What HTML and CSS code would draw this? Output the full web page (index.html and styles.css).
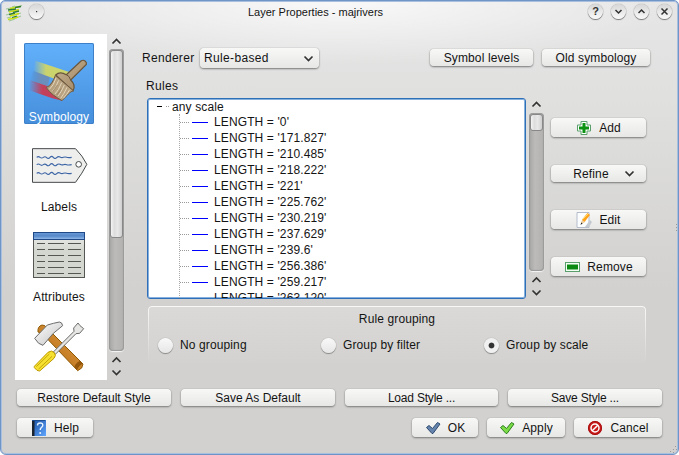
FILE: index.html
```html
<!DOCTYPE html>
<html lang="en">
<head>
<meta charset="utf-8">
<title>Layer Properties - majrivers</title>
<link rel="stylesheet" href="styles.css">
</head>
<body>
<div class="window">
  <header class="titlebar">
    <svg class="app-icon" width="18" height="18" viewBox="0 0 18 18" fill="none">
      <path d="M7 3l3-1M12 3l5-1.500M1 5l5-1M3 7.500l4-.5M1 11l4-1M9 11l7-2M2 14l4-1M9 15l7-3M4 17l6-2" stroke="#9fc79a" stroke-width="1.200"/>
      <path d="M5 4.500l10-2M4 8l10-2.500M5 12l9-2.500M3 15.500l10-2.500" stroke="#cbe010" stroke-width="1.700"/>
      <path d="M10 3.500l6-1M3 6l8-1M8 8.500l6-1.500M4 10.500l6-1.500M7 13.500l5-1.500" stroke="#2f7d35" stroke-width="1.300"/>
    </svg>
    <span class="round"><svg width="15" height="15" viewBox="0 0 15 15"><rect x="7" y="7" width="1.200" height="1.200" fill="#333"/></svg></span>
    <h1 class="title">Layer Properties - majrivers</h1>
    <span class="round help">?</span>
    <span class="round"><svg class="chev" width="15" height="15" viewBox="0 0 15 15"><path d="M4.500 6l3 3 3-3"/></svg></span>
    <span class="round"><svg class="chev" width="15" height="15" viewBox="0 0 15 15"><path d="M4.500 9l3-3 3 3"/></svg></span>
    <span class="round"><svg class="chev" width="15" height="15" viewBox="0 0 15 15"><path d="M4.500 4.500l6 6m0-6l-6 6"/></svg></span>
  </header>

  <div class="content">
    <nav class="pages">
      <div class="page selected">
        <svg width="64" height="47" viewBox="84 171 192 141">
          <defs>
            <linearGradient id="yl"><stop offset="0" stop-color="#cbd36d" stop-opacity="0"/><stop offset=".35" stop-color="#cbd36d"/></linearGradient>
            <linearGradient id="rd"><stop offset="0" stop-color="#c8374f" stop-opacity="0"/><stop offset=".4" stop-color="#c3405a"/></linearGradient>
            <linearGradient id="bl"><stop offset="0" stop-color="#5484bd" stop-opacity="0"/><stop offset=".5" stop-color="#6a8fbd"/></linearGradient>
            <linearGradient id="br" x1="0" y1="0" x2="1" y2="1"><stop offset="0" stop-color="#c9b391"/><stop offset="1" stop-color="#9d8361"/></linearGradient>
          </defs>
          <path d="M106 212l50 17-8 32-52-18z" fill="url(#bl)"/>
          <path d="M112 182l104 35-8 18-36 2-66-24z" fill="url(#yl)"/>
          <path d="M95 240l52 18 46 44-30-7-70-24z" fill="url(#rd)"/>
          <path d="M173 225c8-8 20-8 32-1l44-41c9-6 18 2 16 10l-47 47c13 12 12 24 7 33z" fill="url(#br)" stroke="#68543a" stroke-width="3.500"/>
          <path d="M205 224q10 4 13 16" fill="none" stroke="#68543a" stroke-width="3"/>
          <path d="M172 226l54 46c-12 5-17 13-34 30-16-9-36-22-47-39 14-7 22-21 27-37z" fill="#b8a17f" stroke="#6e5a3e" stroke-width="3"/>
          <path d="M174 234q-7 23-20 34M182 241q-8 23-20 34M191 248q-9 23-20 34M199 255q-9 22-19 33M207 262q-9 20-19 33M215 269q-9 16-19 26" stroke="#e2d6bc" stroke-width="3" fill="none"/>
          <path d="M152 262l12-17M164 275l14-20M177 285l13-20" stroke="#7a6547" stroke-width="1.500"/>
        </svg>
        <span class="page-name">Symbology</span>
      </div>
      <div class="page">
        <svg class="labels-icon" width="57" height="37" viewBox="93 21 171 111" fill="none">
          <path d="M97.500 26h129q21 21 34 47-13 26-34 54h-129z" fill="#eeefed" stroke="#45494b" stroke-width="3"/>
          <circle cx="236" cy="73" r="8.500" fill="#fff" stroke="#45494b" stroke-width="3"/>
          <path d="M110 52q5-4 10 0t10 0 10 1 10-1 10 0 10 1 10-2 10 1 10 0 15 0M110 74q5-4 10 0t10 0 10 1 10-1 10 0 10 1 10-2 10 1 10 0 15 0M110 100q5-4 10 0t10 0 10 1 10-1 10 0 10 1 10-2 10 1 10 0 15 0" stroke="#3c64a5" stroke-width="3.400"/>
        </svg>
        <span class="page-name">Labels</span>
      </div>
      <div class="page">
        <svg class="attributes-icon" width="54" height="48" viewBox="0 0 54 48">
          <defs><linearGradient id="hd" x2="0" y2="1"><stop stop-color="#6b9ad8"/><stop offset=".5" stop-color="#5688c8"/><stop offset="1" stop-color="#9bc0ee"/></linearGradient>
          <linearGradient id="tb" x2="0" y2="1"><stop stop-color="#eeeeec"/><stop offset=".4" stop-color="#d3d7cf"/><stop offset="1" stop-color="#d3d7cf"/></linearGradient></defs>
          <rect x="1.500" y="1.500" width="51" height="45" fill="url(#tb)" stroke="#555753"/>
          <rect x="1.500" y="1.500" width="51" height="7" fill="url(#hd)" stroke="#204a87"/>
          <path d="M5 12.500h8m3 0h16m4 0h13M5 18.500h8m3 0h16m4 0h13M5 24.500h8m3 0h16m4 0h13M5 30.500h8m3 0h16m4 0h13M5 36.500h8m3 0h16m4 0h13M5 42.500h8m3 0h16m4 0h13" stroke="#555753"/>
        </svg>
        <span class="page-name">Attributes</span>
      </div>
      <div class="page">
        <svg width="52" height="52" viewBox="99 180 156 156" stroke-width="3" stroke-linejoin="round">
          <defs><linearGradient id="st" x2="1" y2="1"><stop stop-color="#fff"/><stop offset="1" stop-color="#c2c2c2"/></linearGradient>
          <linearGradient id="wd" x1="1" y1="0" x2="0" y2="1"><stop stop-color="#e0a04a"/><stop offset=".5" stop-color="#c9822a"/><stop offset="1" stop-color="#a8650f"/></linearGradient></defs>
          <path d="M114 216q-2-17 12-21 10 0 14 8l109 109-4 12-12 8-82-86-22-24z" fill="url(#wd)" stroke="#8f5902"/>
          <path d="M248 311q-10 4-17 19l-8-9q5-14 17-18z" fill="#93560a" stroke="none"/>
          <path d="M104 235l38-40q20-6 36-9 8 0 10 11l-28 23-31 36q-14-2-25-21z" fill="url(#st)" stroke="#6b6d6a"/>
          <path d="M160 276l62-62-1-10 13-15 6 8 11 9-12 14-11 1-62 62z" fill="#e6e7e5" stroke="#6b6d6a"/>
          <path d="M103 319l41-42q11-8 19 1 7 8-1 17l-43 38-8-2-8-8z" fill="#f6e030" stroke="#bd9900"/>
          <path d="M109 320l39-38M116 327l40-38" stroke="#b99b00" stroke-width="2.500"/>
        </svg>
      </div>
    </nav>
    <div class="scroll side-scroll">
      <svg class="arrow" width="15" height="15" viewBox="0 0 15 15"><path d="M3.500 9.500l4-4 4 4"/></svg>
      <div class="track"><div class="thumb"></div></div>
      <svg class="arrow" width="15" height="13" viewBox="0 0 15 13"><path d="M3.500 9l4-4 4 4"/></svg>
      <svg class="arrow" width="15" height="13" viewBox="0 0 15 13"><path d="M3.500 4.500l4 4 4-4"/></svg>
    </div>

    <main class="main">
      <div class="toolbar">
        <label class="renderer">Renderer</label>
        <div class="btn combo"><span>Rule-based</span><svg class="arrow" width="15" height="13" viewBox="0 0 15 13"><path d="M3.500 4.500l4 4 4-4"/></svg></div>
        <button class="btn levels">Symbol levels</button>
        <button class="btn old">Old symbology</button>
      </div>
      <div class="rules-label">Rules</div>
      <div class="rules">
        <div class="tree">
          <div class="root"><i class="minus"></i><i class="dots"></i><span>any scale</span></div>
          <ul class="nodes">
            <li><i class="dots"></i><i class="line"></i>LENGTH = '0'</li>
            <li><i class="dots"></i><i class="line"></i>LENGTH = '171.827'</li>
            <li><i class="dots"></i><i class="line"></i>LENGTH = '210.485'</li>
            <li><i class="dots"></i><i class="line"></i>LENGTH = '218.222'</li>
            <li><i class="dots"></i><i class="line"></i>LENGTH = '221'</li>
            <li><i class="dots"></i><i class="line"></i>LENGTH = '225.762'</li>
            <li><i class="dots"></i><i class="line"></i>LENGTH = '230.219'</li>
            <li><i class="dots"></i><i class="line"></i>LENGTH = '237.629'</li>
            <li><i class="dots"></i><i class="line"></i>LENGTH = '239.6'</li>
            <li><i class="dots"></i><i class="line"></i>LENGTH = '256.386'</li>
            <li><i class="dots"></i><i class="line"></i>LENGTH = '259.217'</li>
            <li><i class="dots"></i><i class="line"></i>LENGTH = '263.120'</li>
          </ul>
        </div>
        <div class="scroll tree-scroll">
          <svg class="arrow" width="15" height="15" viewBox="0 0 15 15"><path d="M3.500 8.500l4-4 4 4"/></svg>
          <div class="track"><div class="thumb"></div></div>
          <svg class="arrow" width="15" height="13" viewBox="0 0 15 13"><path d="M3.500 9l4-4 4 4"/></svg>
          <svg class="arrow" width="15" height="13" viewBox="0 0 15 13"><path d="M3.500 4.500l4 4 4-4"/></svg>
        </div>
        <div class="actions">
          <button class="btn tall"><svg width="16" height="16" viewBox="0 0 16 16"><path d="M5 1.500h6v3.500h3.500v6H11v3.500H5V11H1.500V5H5z" fill="#fff" stroke="#5a9e6c" stroke-linejoin="round"/><path d="M6.500 3h3v3.500H13v3H9.500V13h-3V9.500H3v-3h3.500z" fill="#0b9210"/></svg><span>Add</span></button>
          <button class="btn refine"><span>Refine</span><svg class="arrow" width="15" height="13" viewBox="0 0 15 13"><path d="M3.500 4.500l4 4 4-4"/></svg></button>
          <button class="btn tall"><svg width="16" height="16" viewBox="0 0 16 16"><path d="M1 .5h12v15H1z" fill="#fbfdff" stroke="#b5bccb"/><path d="M9 15l5-7 2 2-3 5z" fill="#c5c9d0"/><path d="M5 12l1.500-5 5-6 2.500 2-5.500 7z" fill="#ffa21a"/><path d="M7 7l5-5" stroke="#ffdc65"/><path d="M5 12l1.200-4 2.600 2z" fill="#ecd1aa"/><path d="M4.500 13l.8-2.500 1.300 1z" fill="#222"/></svg><span>Edit</span></button>
          <button class="btn tall"><svg width="16" height="16" viewBox="0 0 16 16"><rect x="1.500" y="3.500" width="14" height="9" fill="#f4fff4" stroke="#5a9e6c"/><rect x="3" y="5.500" width="11" height="5" fill="#0b8a12"/></svg><span>Remove</span></button>
        </div>
      </div>
      <fieldset class="grouping">
        <div class="group-title">Rule grouping</div>
        <div class="options">
          <div class="option"><i class="radio"></i><span>No grouping</span></div>
          <div class="option"><i class="radio"></i><span>Group by filter</span></div>
          <div class="option"><i class="radio on"></i><span>Group by scale</span></div>
        </div>
      </fieldset>
    </main>
  </div>

  <div class="style-row">
    <button class="btn">Restore Default Style</button>
    <button class="btn">Save As Default</button>
    <button class="btn dotted">Load Style ...</button>
    <button class="btn dotted">Save Style ...</button>
  </div>
  <footer class="dialog-row">
    <button class="btn help-btn"><svg width="16" height="16" viewBox="0 0 16 16"><defs><linearGradient id="bk" x2="1" y2="1"><stop stop-color="#174f9f"/><stop offset="1" stop-color="#60a5ff"/></linearGradient></defs><path d="M1 0h14v16H1z" fill="url(#bk)"/><path d="M1 0h2.500v16H1z" fill="#1c2430"/><path d="M1 0h13v1H1z" fill="#1c4d90"/><path d="M6.500 5.500q0-2.500 2.700-2.500t2.600 2.300c0 2-2.600 2.200-2.600 4.700" stroke="#e8f4ff" stroke-width="1.400" fill="none"/><circle cx="9.200" cy="13" r="1" fill="#e8f4ff"/></svg><span>Help</span></button>
    <button class="btn ok-btn"><svg width="16" height="16" viewBox="0 0 16 16"><path d="M1.500 7.500l2.500-2 3.500 3 5-6 2.500 1.500-7 9.500h-1z" fill="#6484ae" stroke="#2e4a6e" stroke-linejoin="round"/></svg><span>OK</span></button>
    <button class="btn apply-btn"><svg width="16" height="16" viewBox="0 0 16 16"><path d="M1.500 7.500l2.500-2 3.500 3 5-6 2.500 1.500-7 9.500h-1z" fill="#7bdc48" stroke="#2c7d1c" stroke-linejoin="round"/></svg><span>Apply</span></button>
    <button class="btn cancel-btn"><svg width="16" height="16" viewBox="0 0 16 16"><circle cx="8" cy="8" r="7" fill="#c81a1a"/><circle cx="8" cy="8" r="4" fill="none" stroke="#fff" stroke-width="1.500"/><path d="M5.200 10.800l5.600-5.600" stroke="#fff" stroke-width="1.500"/><circle cx="8" cy="8" r="6.600" fill="none" stroke="#9d0d0d" stroke-width=".8"/></svg><span>Cancel</span></button>
  </footer>
  <svg class="right-grip" width="3" height="9" viewBox="0 0 3 9" fill="#999"><path d="M1 0h1v1H1zM1 3h1v1H1zM1 6h1v1H1z"/></svg>
  <svg class="corner-grip" width="8" height="8" viewBox="0 0 8 8" fill="#999"><path d="M5 0h1v1H5zM3 3h1v1H3zM6 3h1v1H6zM0 5h1v1H0zM3 6h1v1H3z"/></svg>
</div>
</body>
</html>
```

FILE: styles.css
```css
* { box-sizing: border-box; }
body {
  margin: 0;
  background: #fff;
  font: 12px/16px "Liberation Sans", Arial, sans-serif;
  letter-spacing: .12px;
  color: #141414;
}
.window {
  position: relative;
  width: 679px;
  height: 455px;
  overflow: hidden;
  display: flex;
  flex-direction: column;
  border: 1px solid #6f94c6;
  border-radius: 5px 5px 6px 6px;
  box-shadow: inset 0 0 0 1px #a9bfdf;
  background:
    radial-gradient(ellipse 340px 64px at 339px 0, rgba(255,255,255,.75), rgba(255,255,255,0)),
    linear-gradient(#e6e6e6 0, #dfdfde 110px, #d2d1cf 290px, #d2d1cf 100%);
}
.titlebar {
  display: flex;
  height: 33px;
  padding: 3px 6px 0 4px;
}
.app-icon { margin-right: 6px; }
.title {
  flex: 1;
  margin: 0;
  padding-left: 204px;
  font-size: 11px;
  line-height: 16px;
  font-weight: normal;
  letter-spacing: 0;
  white-space: nowrap;
}
.round {
  flex: none;
  width: 15px;
  height: 15px;
  border-radius: 50%;
  background: linear-gradient(#d6d6d6, #fafafa);
  box-shadow: 0 0 1px #666, 0 1px 1px #777;
}
.round svg { display: block; }
.round + .round { margin-left: 8px; }
.help { font-size: 11px; font-weight: bold; line-height: 15px; text-align: center; color: #333; letter-spacing: 0; }
.chev path { fill: none; stroke: #333; stroke-width: 1.5; }
.content { display: flex; height: 346px; padding-left: 14px; }
.pages {
  width: 92px;
  padding: 9px 13px 0 9px;
  background: #fff;
  display: flex;
  flex-direction: column;
  gap: 9px;
  overflow: hidden;
}
.page {
  flex: none;
  height: 81px;
  width: 70px;
  display: grid;
  grid-template-rows: 64px 16px;
  justify-items: center;
  align-items: center;
}
.page > svg { align-self: start; margin-top: 7px; }
.page.selected > svg { margin: 14px 2px 0 0; }
.page > .labels-icon { margin-top: 14px; }
.page > .attributes-icon { margin-top: 8px; }
.page:first-child {
  background: linear-gradient(#62b0fb, #458edb);
  color: #fff;
  border-radius: 2px;
  box-shadow: inset 0 0 0 1px #3e80c8;
}
.page-name { line-height: 16px; padding-top: 3px; }
.scroll { width: 15px; display: flex; flex-direction: column; flex: none; }
.scroll .arrow { flex: none; }
.arrow path { fill: none; stroke: #333; stroke-width: 1.7; }
.side-scroll { margin-left: 2px; padding-bottom: 1px; }
.track {
  flex: 1;
  margin-bottom: 2px;
  border-radius: 4px;
  padding: 1px;
  background: linear-gradient(90deg, #a5a5a4, #bcbbba 40%, #b2b1b0);
  box-shadow: inset 0 0 1px 1px #999, 0 1px 1px #f6f6f6;
}
.thumb {
  height: 188px;
  border: 1px solid #888;
  border-radius: 3px;
  background: linear-gradient(90deg, #f4f4f4, #ddd 30%, #e8e8e8 60%, #cfcfcf);
}
.main { width: 510px; margin-left: 18px; }
.toolbar { display: flex; height: 48px; padding-top: 13px; }
.renderer { width: 58px; line-height: 22px; letter-spacing: .3px; }
.btn {
  display: flex;
  align-items: center;
  justify-content: center;
  height: 19px;
  margin: 0;
  padding: 0;
  border: 0;
  border-radius: 4px;
  background: linear-gradient(#f8f8f7, #e7e7e6);
  box-shadow: 0 0 1px #999, 0 1px 2px #777;
  color: #141414;
  font: inherit;
  letter-spacing: inherit;
  white-space: nowrap;
}
.btn.combo { width: 119px; height: 20px; margin-top: 1px; padding: 0 3px 0 4px; justify-content: space-between; letter-spacing: .35px; }
.levels { width: 103px; margin: 2px 9px 0 111px; height: 17px; }
.old { width: 108px; margin-top: 2px; height: 17px; }
.rules-label { height: 16px; line-height: 16px; padding-left: 4px; margin-top: -4px; letter-spacing: .3px; }
.rules { display: flex; height: 201px; margin: 4px 0 0 5px; }
.tree {
  width: 379px;
  background: #fff;
  border: 1px solid #2f6fb8;
  border-radius: 3px;
  box-shadow: inset 0 0 0 1px #86b0dd;
  overflow: hidden;
}
.root { display: flex; align-items: center; height: 15px; padding-left: 9px; }
.minus { width: 5px; height: 1px; background: #000; margin-right: 4px; }
.root .dots { width: 3px; margin-right: 3px; }
.dots { border-top: 1px dotted #999; }
.nodes { list-style: none; margin: 0 0 0 31px; padding: 0; border-left: 1px dotted #aaa; }
.nodes li { display: flex; align-items: center; height: 16px; }
.nodes .dots { width: 9px; }
.line { width: 16px; height: 1px; background: #00f; margin: 0 6px 0 3px; }
.tree-scroll { margin-left: 3px; }
.tree-scroll .thumb { height: 17px; }
.actions { width: 95px; margin-left: 7px; padding-top: 20px; display: flex; flex-direction: column; gap: 28px; }
.actions .btn { flex: none; }
.tall, .dialog-row .btn { gap: 7px; }
.refine { height: 17px; padding-left: 13px; gap: 13px; }
.grouping {
  margin: 7px 0 0 6px;
  padding: 4px 0 0;
  width: 498px;
  min-width: 0;
  height: 58px;
  border: 1px solid transparent;
  border-radius: 4px;
  background: linear-gradient(#dad9d7, #d3d2d0) padding-box, linear-gradient(#f8f8f8, #d2d1cf) border-box;
}
.group-title { text-align: center; line-height: 16px; }
.options { display: flex; padding: 10px 0 0 9px; }
.option { flex: none; width: 163px; display: flex; align-items: center; gap: 7px; line-height: 17px; white-space: nowrap; }
.radio {
  width: 15px;
  height: 15px;
  border-radius: 50%;
  background: linear-gradient(#f9f9f9, #e6e6e6);
  box-shadow: 0 0 1px #888, 0 1px 1px #888;
}
.radio.on { background: radial-gradient(circle, #333 0 2.5px, #f0f0f0 3.3px); }
.style-row { display: grid; grid-template-columns: 154px 154px 153px 154px; gap: 10px; padding: 9px 0 0 16px; letter-spacing: 0; }
.style-row .btn { height: 17px; }
.style-row .dotted { letter-spacing: -.2px; }
.dialog-row { display: flex; gap: 9px; padding: 12px 0 0 16px; }
.dialog-row .btn { height: 19px; }
.help-btn { width: 76px; margin-right: auto; }
.ok-btn { width: 66px; }
.apply-btn { width: 78px; }
.cancel-btn { width: 88px; margin-right: 16px; }
.right-grip { position: absolute; right: 0; top: 223px; }
.corner-grip { position: absolute; right: 0; bottom: 0; }
```
